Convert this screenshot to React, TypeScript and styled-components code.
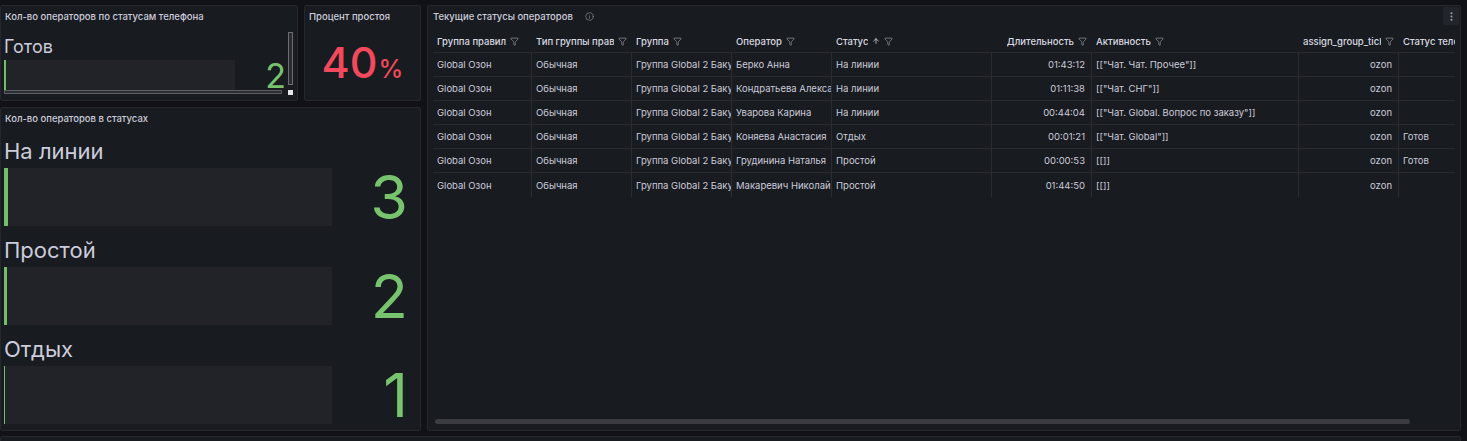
import React from "react";
import styled, { createGlobalStyle } from "styled-components";
import { Funnel, ArrowUp, Info, EllipsisVertical } from "lucide-react";

const GlobalStyle = createGlobalStyle`
  html, body {
    margin: 0;
    padding: 0;
  }
  body {
    background: #111217;
    color: #ccccdc;
    font-family: Inter, "Noto Sans", "Liberation Sans", sans-serif;
    overflow: hidden;
  }
  * {
    box-sizing: border-box;
  }
`;

const Dashboard = styled.main`
  display: grid;
  grid-template-columns: 421px 1fr;
  grid-template-rows: 426px 120px;
  gap: 5px 6px;
  padding: 5px 6px 0 0;
  width: 1467px;
`;

const LeftColumn = styled.div`
  display: flex;
  flex-direction: column;
  gap: 6px;
  min-height: 0;
`;

const TopRow = styled.div`
  display: grid;
  grid-template-columns: 298px 1fr;
  gap: 6px;
  height: 96px;
`;

const Panel = styled.section<{ $wide?: boolean }>`
  background: #181b1f;
  border: 1px solid #25272d;
  border-radius: 2px;
  display: flex;
  flex-direction: column;
  min-width: 0;
  min-height: 0;
  overflow: hidden;
  flex: 1;
  grid-column: ${(p) => (p.$wide ? "1 / -1" : "auto")};
`;

const PanelHeader = styled.header`
  height: 20px;
  flex-shrink: 0;
  display: flex;
  align-items: center;
  padding: 0 5px 0 4px;
`;

const TableHeader = styled(PanelHeader)`
  padding: 0 1px 0 5px;
`;

const PanelTitle = styled.h2`
  margin: 0;
  font-size: 9.5px;
  font-weight: 500;
  color: #ccccdc;
  white-space: nowrap;
`;

const InfoMark = styled.span`
  display: flex;
  margin-left: 12px;
  color: #8e8e99;
`;

const MenuButton = styled.button`
  margin-left: auto;
  width: 16px;
  height: 18px;
  padding: 0;
  border: none;
  border-radius: 2px;
  background: #22252b;
  color: #9fa0a8;
  display: flex;
  align-items: center;
  justify-content: center;
`;

/* ---------- bar gauges ---------- */

const ScrollBox = styled.div`
  flex: 1;
  min-height: 0;
  display: grid;
  grid-template-columns: 1fr 5px;
  grid-template-rows: 1fr 5px;
  padding: 6px 4px 5px 3px;
`;

const ScrollContent = styled.div`
  display: flex;
  flex-direction: column;
  justify-content: flex-end;
  min-width: 0;
`;

const VScroll = styled.div`
  margin-bottom: 5px;
  border: 1px solid #6b6d72;
  background: #2a2c31;
`;

const HScroll = styled.div`
  margin-right: 6px;
  height: 4px;
  border: 1px solid #5d5f64;
  background: #2a2c31;
`;

const ScrollCorner = styled.div`
  background: #e6e6e6;
`;

const GaugeList = styled.div`
  flex: 1;
  min-height: 0;
  display: flex;
  flex-direction: column;
  gap: 11px;
  padding: 10px 2px 6px 3px;
`;

type Size = "small" | "large";

const GaugeBox = styled.div<{ $size: Size }>`
  display: flex;
  flex-direction: column;
  gap: ${(p) => (p.$size === "large" ? 4 : 3)}px;
`;

const GaugeLabel = styled.div<{ $size: Size }>`
  font-size: ${(p) => (p.$size === "large" ? 22 : 18)}px;
  line-height: ${(p) => (p.$size === "large" ? 26 : 20)}px;
  color: #ccccdc;
  white-space: nowrap;
`;

const GaugeRow = styled.div<{ $size: Size }>`
  display: grid;
  grid-template-columns: 1fr ${(p) => (p.$size === "large" ? 86 : 53)}px;
  height: ${(p) => (p.$size === "large" ? 58 : 30)}px;
`;

const Track = styled.div`
  display: flex;
  background: #212329;
`;

const Fill = styled.div`
  height: 100%;
  background: #73bf69;
`;

const GaugeValue = styled.div<{ $size: Size }>`
  text-align: right;
  padding-right: ${(p) => (p.$size === "large" ? 10 : 2)}px;
  font-size: ${(p) => (p.$size === "large" ? 61 : 34)}px;
  line-height: ${(p) => (p.$size === "large" ? 58 : 31)}px;
  color: #78c46e;
  white-space: nowrap;
`;

/* ---------- stat ---------- */

const StatBody = styled.div`
  flex: 1;
  display: flex;
  align-items: center;
  justify-content: center;
  padding-bottom: 2px;
`;

const StatValue = styled.div`
  display: flex;
  align-items: baseline;
  color: #f2495c;
  font-size: 43px;
  font-weight: 500;
  line-height: 1;
`;

const StatUnit = styled.span`
  font-size: 25px;
  margin-left: 1px;
`;

/* ---------- table ---------- */

const TableBody = styled.div`
  flex: 1;
  min-height: 0;
  display: flex;
  flex-direction: column;
  padding: 4px 5px 0 5px;
`;

const TableViewport = styled.div`
  flex: 1;
  min-height: 0;
  overflow: hidden;
`;

const Row = styled.div<{ $template: string; $head?: boolean }>`
  display: grid;
  grid-template-columns: ${(p) => p.$template};
  height: ${(p) => (p.$head ? 23 : 24)}px;
  border-bottom: 1px solid #2a2c32;
  &:last-child {
    border-bottom: none;
  }
`;

const HeadCell = styled.div<{ $right?: boolean }>`
  display: flex;
  align-items: center;
  justify-content: ${(p) => (p.$right ? "flex-end" : "flex-start")};
  gap: 4px;
  padding: 0 5px 0 4px;
  min-width: 0;
  font-size: 9.5px;
  font-weight: 500;
  color: #d8d9e0;
  white-space: nowrap;
`;

const HeadText = styled.span`
  overflow: hidden;
  min-width: 0;
`;

const HeadIcon = styled.span<{ $bright?: boolean }>`
  display: flex;
  flex-shrink: 0;
  color: ${(p) => (p.$bright ? "#ccccdc" : "#9a9ba3")};
`;

const Cell = styled.div<{ $right?: boolean }>`
  display: flex;
  align-items: center;
  justify-content: ${(p) => (p.$right ? "flex-end" : "flex-start")};
  padding: 0 6px 0 4px;
  min-width: 0;
  overflow: hidden;
  white-space: nowrap;
  font-size: 9.5px;
  color: #ccccdc;
  border-right: 1px solid #2a2c32;
`;

const ScrollThumb = styled.div`
  height: 5px;
  margin: 0 45px 6px 2px;
  border-radius: 3px;
  background: #3a3c42;
  flex-shrink: 0;
`;

type GaugeItem = { label: string; value: number };

const GAUGE_MAX = 250;

const phoneStatuses: GaugeItem[] = [{ label: "Готов", value: 2 }];

const operatorStatuses: GaugeItem[] = [
  { label: "На линии", value: 3 },
  { label: "Простой", value: 2 },
  { label: "Отдых", value: 1 },
];

type Column = { title: string; width: number; right?: boolean; sort?: boolean };

const columns: Column[] = [
  { title: "Группа правил", width: 99 },
  { title: "Тип группы правил", width: 100 },
  { title: "Группа", width: 100 },
  { title: "Оператор", width: 100 },
  { title: "Статус", width: 160, sort: true },
  { title: "Длительность", width: 100, right: true },
  { title: "Активность", width: 207 },
  { title: "assign_group_ticket", width: 100, right: true },
  { title: "Статус телефона", width: 160 },
];

const rows: string[][] = [
  ["Global Озон", "Обычная", "Группа Global 2 Баку", "Берко Анна", "На линии", "01:43:12", '[["Чат. Чат. Прочее"]]', "ozon", ""],
  ["Global Озон", "Обычная", "Группа Global 2 Баку", "Кондратьева Александра", "На линии", "01:11:38", '[["Чат. СНГ"]]', "ozon", ""],
  ["Global Озон", "Обычная", "Группа Global 2 Баку", "Уварова Карина", "На линии", "00:44:04", '[["Чат. Global. Вопрос по заказу"]]', "ozon", ""],
  ["Global Озон", "Обычная", "Группа Global 2 Баку", "Коняева Анастасия", "Отдых", "00:01:21", '[["Чат. Global"]]', "ozon", "Готов"],
  ["Global Озон", "Обычная", "Группа Global 2 Баку", "Грудинина Наталья", "Простой", "00:00:53", "[[]]", "ozon", "Готов"],
  ["Global Озон", "Обычная", "Группа Global 2 Баку", "Макаревич Николай", "Простой", "01:44:50", "[[]]", "ozon", ""],
];

const template = columns.map((c) => `${c.width}px`).join(" ");

const BarGauge = ({ item, size }: { item: GaugeItem; size: Size }) => (
  <GaugeBox $size={size}>
    <GaugeLabel $size={size}>{item.label}</GaugeLabel>
    <GaugeRow $size={size}>
      <Track>
        <Fill style={{ width: `${(item.value / GAUGE_MAX) * 100}%` }} />
      </Track>
      <GaugeValue $size={size}>{item.value}</GaugeValue>
    </GaugeRow>
  </GaugeBox>
);

const App = () => {
  return (
    <>
      <GlobalStyle />
      <Dashboard>
        <LeftColumn>
          <TopRow>
            <Panel>
              <PanelHeader>
                <PanelTitle>Кол-во операторов по статусам телефона</PanelTitle>
              </PanelHeader>
              <ScrollBox>
                <ScrollContent>
                  {phoneStatuses.map((item) => (
                    <BarGauge key={item.label} item={item} size="small" />
                  ))}
                </ScrollContent>
                <VScroll />
                <HScroll />
                <ScrollCorner />
              </ScrollBox>
            </Panel>
            <Panel>
              <PanelHeader>
                <PanelTitle>Процент простоя</PanelTitle>
              </PanelHeader>
              <StatBody>
                <StatValue>
                  40<StatUnit>%</StatUnit>
                </StatValue>
              </StatBody>
            </Panel>
          </TopRow>
          <Panel>
            <PanelHeader>
              <PanelTitle>Кол-во операторов в статусах</PanelTitle>
            </PanelHeader>
            <GaugeList>
              {operatorStatuses.map((item) => (
                <BarGauge key={item.label} item={item} size="large" />
              ))}
            </GaugeList>
          </Panel>
        </LeftColumn>

        <Panel>
          <TableHeader>
            <PanelTitle>Текущие статусы операторов</PanelTitle>
            <InfoMark>
              <Info size={9} strokeWidth={1.8} />
            </InfoMark>
            <MenuButton aria-label="Меню">
              <EllipsisVertical size={11} strokeWidth={2.5} />
            </MenuButton>
          </TableHeader>
          <TableBody>
            <TableViewport>
              <Row $template={template} $head>
                {columns.map((col) => (
                  <HeadCell key={col.title} $right={col.right}>
                    <HeadText>{col.title}</HeadText>
                    {col.sort && (
                      <HeadIcon $bright>
                        <ArrowUp size={8} strokeWidth={2.5} />
                      </HeadIcon>
                    )}
                    <HeadIcon>
                      <Funnel size={9} strokeWidth={1.8} />
                    </HeadIcon>
                  </HeadCell>
                ))}
              </Row>
              {rows.map((row, i) => (
                <Row key={i} $template={template}>
                  {row.map((value, j) => (
                    <Cell key={j} $right={columns[j].right}>
                      {value}
                    </Cell>
                  ))}
                </Row>
              ))}
            </TableViewport>
            <ScrollThumb />
          </TableBody>
        </Panel>

        <Panel $wide />
      </Dashboard>
    </>
  );
};

export default App;
